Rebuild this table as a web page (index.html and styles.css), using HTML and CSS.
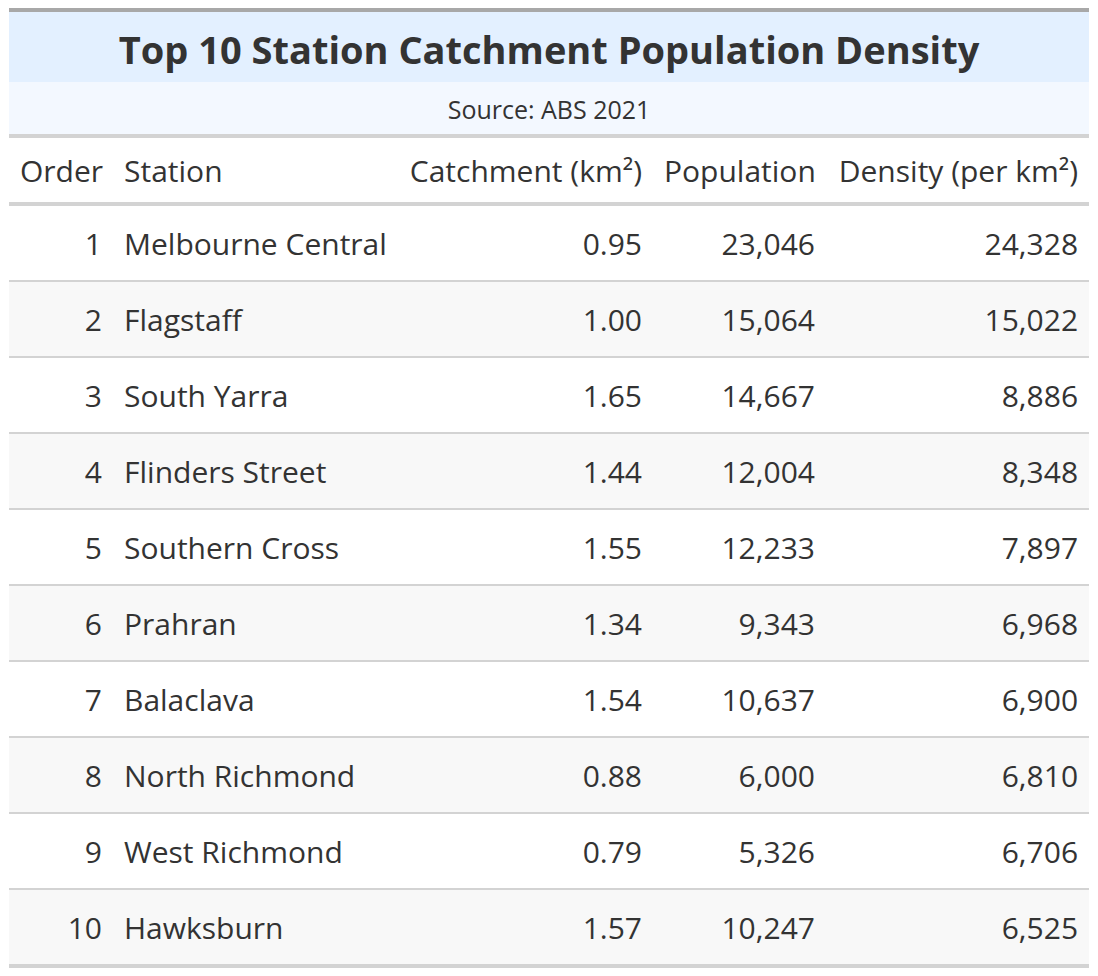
FILE: index.html
```html
<!DOCTYPE html>
<html>
<head>
<meta charset="utf-8">
<link rel="stylesheet" href="styles.css">
</head>
<body>
<div class="wrap">
<table class="gt">
  <colgroup>
    <col class="c-order">
    <col class="c-station">
    <col class="c-catch">
    <col class="c-pop">
    <col class="c-dens">
  </colgroup>
  <thead>
    <tr><th colspan="5" class="title">Top 10 Station Catchment Population Density</th></tr>
    <tr><th colspan="5" class="subtitle">Source: ABS 2021</th></tr>
    <tr class="labels">
      <th class="r">Order</th>
      <th class="l">Station</th>
      <th class="r">Catchment (km²)</th>
      <th class="r">Population</th>
      <th class="r">Density (per km²)</th>
    </tr>
  </thead>
  <tbody>
    <tr><td class="r">1</td><td class="l">Melbourne Central</td><td class="r">0.95</td><td class="r">23,046</td><td class="r">24,328</td></tr>
    <tr class="alt"><td class="r">2</td><td class="l">Flagstaff</td><td class="r">1.00</td><td class="r">15,064</td><td class="r">15,022</td></tr>
    <tr><td class="r">3</td><td class="l">South Yarra</td><td class="r">1.65</td><td class="r">14,667</td><td class="r">8,886</td></tr>
    <tr class="alt"><td class="r">4</td><td class="l">Flinders Street</td><td class="r">1.44</td><td class="r">12,004</td><td class="r">8,348</td></tr>
    <tr><td class="r">5</td><td class="l">Southern Cross</td><td class="r">1.55</td><td class="r">12,233</td><td class="r">7,897</td></tr>
    <tr class="alt"><td class="r">6</td><td class="l">Prahran</td><td class="r">1.34</td><td class="r">9,343</td><td class="r">6,968</td></tr>
    <tr><td class="r">7</td><td class="l">Balaclava</td><td class="r">1.54</td><td class="r">10,637</td><td class="r">6,900</td></tr>
    <tr class="alt"><td class="r">8</td><td class="l">North Richmond</td><td class="r">0.88</td><td class="r">6,000</td><td class="r">6,810</td></tr>
    <tr><td class="r">9</td><td class="l">West Richmond</td><td class="r">0.79</td><td class="r">5,326</td><td class="r">6,706</td></tr>
    <tr class="alt last"><td class="r">10</td><td class="l">Hawksburn</td><td class="r">1.57</td><td class="r">10,247</td><td class="r">6,525</td></tr>
  </tbody>
</table>
</div>
</body>
</html>
```

FILE: styles.css
```css
html, body {
  margin: 0;
  padding: 0;
  background: #ffffff;
}
.wrap {
  padding: 8px 9px;
}
.gt {
  width: 1080px;
  border-spacing: 0;
  border-collapse: separate;
  table-layout: fixed;
  font-family: "Open Sans", "Noto Sans", sans-serif;
  color: #333333;
  font-size: 30px;
}
.c-order { width: 104px; }
.c-station { width: 284px; }
.c-catch { width: 256px; }
.c-pop { width: 173px; }
.c-dens { width: 263px; }

.gt th, .gt td {
  white-space: nowrap;
  padding-left: 11px;
  padding-right: 11px;
}
.r { text-align: right; }
.l { text-align: left; }

.gt .title {
  border-top: 4px solid #a8a8a8;
  background: #e3f0ff;
  font-size: 38px;
  font-weight: 700;
  line-height: 48px;
  padding-top: 13px;
  padding-bottom: 9px;
  text-align: center;
}
.gt .subtitle {
  background: #f3f8ff;
  font-size: 25px;
  font-weight: 400;
  line-height: 38px;
  padding-top: 8px;
  padding-bottom: 6px;
  text-align: center;
  border-bottom: 4px solid #d3d3d3;
}
.gt .labels th {
  font-weight: 400;
  line-height: 42px;
  padding-top: 12px;
  padding-bottom: 10px;
  border-bottom: 4px solid #d3d3d3;
}
.gt td {
  line-height: 42px;
  padding-top: 17px;
  padding-bottom: 15px;
  border-top: 2px solid #d3d3d3;
}
.gt tbody tr:first-child td {
  border-top: 0;
}
.gt .alt td {
  background: #f8f8f8;
}
.gt .last td {
  border-bottom: 4px solid #d3d3d3;
}
```
